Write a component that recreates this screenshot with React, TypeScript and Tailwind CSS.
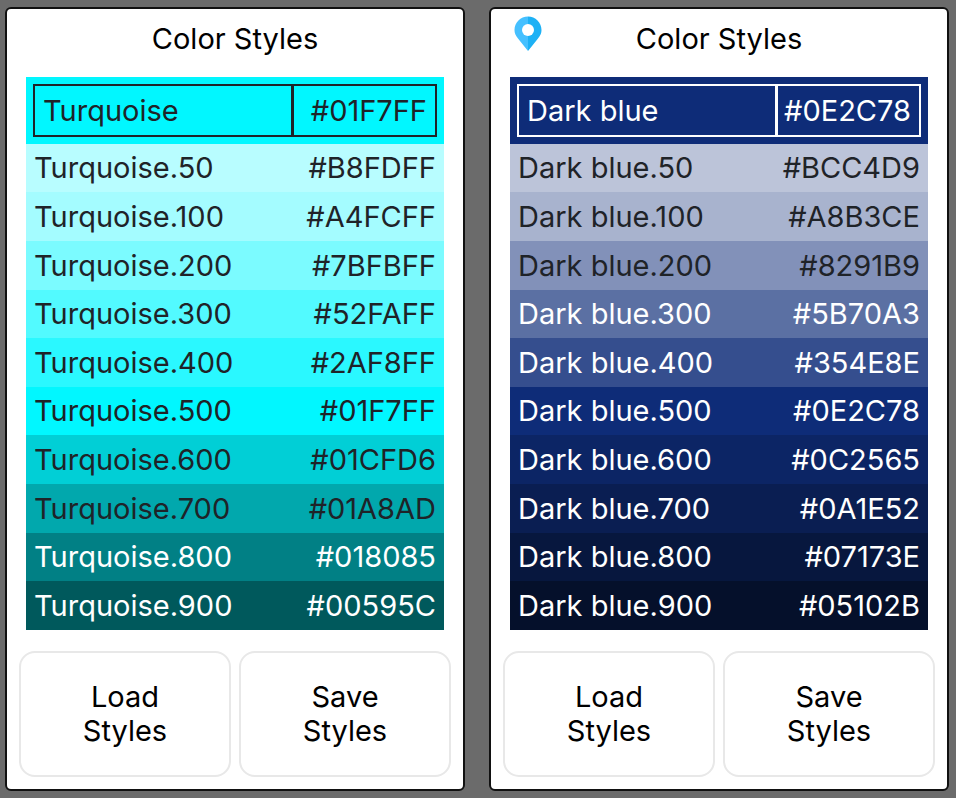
import React from "react";

type Row = { name: string; hex: string; bg: string; light: boolean };

const turquoise: Row[] = [
  { name: "Turquoise.50", hex: "#B8FDFF", bg: "bg-[#B8FDFF]", light: false },
  { name: "Turquoise.100", hex: "#A4FCFF", bg: "bg-[#A4FCFF]", light: false },
  { name: "Turquoise.200", hex: "#7BFBFF", bg: "bg-[#7BFBFF]", light: false },
  { name: "Turquoise.300", hex: "#52FAFF", bg: "bg-[#52FAFF]", light: false },
  { name: "Turquoise.400", hex: "#2AF8FF", bg: "bg-[#2AF8FF]", light: false },
  { name: "Turquoise.500", hex: "#01F7FF", bg: "bg-[#01F7FF]", light: false },
  { name: "Turquoise.600", hex: "#01CFD6", bg: "bg-[#01CFD6]", light: false },
  { name: "Turquoise.700", hex: "#01A8AD", bg: "bg-[#01A8AD]", light: false },
  { name: "Turquoise.800", hex: "#018085", bg: "bg-[#018085]", light: true },
  { name: "Turquoise.900", hex: "#00595C", bg: "bg-[#00595C]", light: true },
];

const darkBlue: Row[] = [
  { name: "Dark blue.50", hex: "#BCC4D9", bg: "bg-[#BCC4D9]", light: false },
  { name: "Dark blue.100", hex: "#A8B3CE", bg: "bg-[#A8B3CE]", light: false },
  { name: "Dark blue.200", hex: "#8291B9", bg: "bg-[#8291B9]", light: false },
  { name: "Dark blue.300", hex: "#5B70A3", bg: "bg-[#5B70A3]", light: true },
  { name: "Dark blue.400", hex: "#354E8E", bg: "bg-[#354E8E]", light: true },
  { name: "Dark blue.500", hex: "#0E2C78", bg: "bg-[#0E2C78]", light: true },
  { name: "Dark blue.600", hex: "#0C2565", bg: "bg-[#0C2565]", light: true },
  { name: "Dark blue.700", hex: "#0A1E52", bg: "bg-[#0A1E52]", light: true },
  { name: "Dark blue.800", hex: "#07173E", bg: "bg-[#07173E]", light: true },
  { name: "Dark blue.900", hex: "#05102B", bg: "bg-[#05102B]", light: true },
];

function Pin() {
  return (
    <svg width="28" height="35" viewBox="0 0 28 35" className="absolute left-[23px] top-[7px]">
      <path d="M14 35 L4 22.5 C1.5 19.5 0.5 17 0.5 14 C0.5 6.5 6.5 0.5 14 0.5 Z" fill="#45C0FF" />
      <path d="M14 35 L24 22.5 C26.5 19.5 27.5 17 27.5 14 C27.5 6.5 21.5 0.5 14 0.5 Z" fill="#1DB1F5" />
      <circle cx="14" cy="14" r="6" fill="#FFFFFF" />
    </svg>
  );
}

function Card(props: {
  name: string;
  hex: string;
  headerBg: string;
  headerText: string;
  boxBorder: string;
  rows: Row[];
  pin?: boolean;
}) {
  const { name, hex, headerBg, headerText, boxBorder, rows, pin } = props;
  return (
    <div className="relative w-[460px] h-[784px] shrink-0 bg-white border-2 border-[#111111] rounded-[6px] flex flex-col items-center">
      {pin && <Pin />}
      <div className="h-[68px] pb-[8px] w-full flex items-center justify-center text-[29px] text-black">Color Styles</div>
      <div className="w-[418px] flex flex-col">
        <div className={`h-[66.8px] px-[7px] flex items-center ${headerBg}`}>
          <div className={`w-full h-[53px] flex border-2 ${boxBorder} ${headerText}`}>
            <div className="w-[256px] flex items-center pl-[8px] text-[29px]">{name}</div>
            <div className={`flex-1 flex items-center justify-end pr-[8px] border-l-[3px] ${boxBorder} text-[29px]`}>{hex}</div>
          </div>
        </div>
        {rows.map((r) => (
          <div
            key={r.name}
            className={`h-[48.6px] flex items-center justify-between px-[8px] text-[29px] ${r.bg} ${r.light ? "text-white" : "text-[#1F2328]"}`}
          >
            <span>{r.name}</span>
            <span>{r.hex}</span>
          </div>
        ))}
      </div>
      <div className="mt-[21px] flex gap-[8px]">
        {["Load Styles", "Save Styles"].map((t) => (
          <button
            key={t}
            className="w-[212px] h-[126px] bg-white border-2 border-[#E8E8E8] rounded-[16px] text-[29px] leading-[34px] text-black px-[50px]"
          >
            {t}
          </button>
        ))}
      </div>
    </div>
  );
}

export default function App() {
  return (
    <div className="w-[956px] h-[798px] overflow-hidden bg-[#6B6B6B] flex gap-[24px] pl-[5px] pt-[7px] font-['Inter',sans-serif] antialiased">
      <Card
        name="Turquoise"
        hex="#01F7FF"
        headerBg="bg-[#01F7FF]"
        headerText="text-[#1F2328]"
        boxBorder="border-[#1F2328]"
        rows={turquoise}
      />
      <Card
        name="Dark blue"
        hex="#0E2C78"
        headerBg="bg-[#0E2C78]"
        headerText="text-white"
        boxBorder="border-white"
        rows={darkBlue}
        pin
      />
    </div>
  );
}
